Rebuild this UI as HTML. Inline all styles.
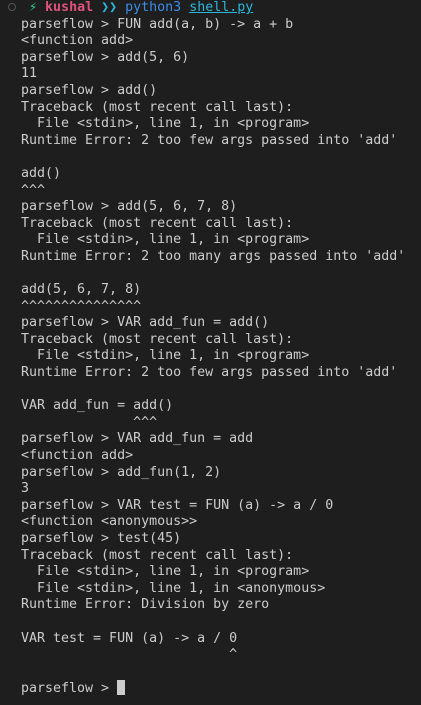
<!DOCTYPE html>
<html><head><meta charset="utf-8"><style>
html,body{margin:0;padding:0;background:#1e1e1e;width:421px;height:705px;overflow:hidden}
pre{margin:0;position:absolute;left:21px;top:0;font-family:"DejaVu Sans Mono","Liberation Mono",monospace;font-size:13.3px;line-height:16.6px;color:#cccccc}
.dot{position:absolute;left:8px;top:3px;width:6px;height:6px;border:1.5px solid #555;border-radius:50%}
.g{color:#23d18b}.k{color:#e0527e;font-weight:bold}.c{color:#29b8db}.b{color:#3b8eea}.u{color:#29b8db;text-decoration:underline}
.cur{display:inline-block;width:8px;height:15px;background:#cccccc;vertical-align:-3px}
</style></head><body>
<div class="dot"></div>
<pre> <span class="g">⚡</span> <span class="k">kushal</span> <span class="c">❯❯</span> <span class="b">python3</span> <span class="u">shell.py</span>
parseflow &gt; FUN add(a, b) -&gt; a + b
&lt;function add&gt;
parseflow &gt; add(5, 6)
11
parseflow &gt; add()
Traceback (most recent call last):
  File &lt;stdin&gt;, line 1, in &lt;program&gt;
Runtime Error: 2 too few args passed into 'add'

add()
^^^
parseflow &gt; add(5, 6, 7, 8)
Traceback (most recent call last):
  File &lt;stdin&gt;, line 1, in &lt;program&gt;
Runtime Error: 2 too many args passed into 'add'

add(5, 6, 7, 8)
^^^^^^^^^^^^^^^
parseflow &gt; VAR add_fun = add()
Traceback (most recent call last):
  File &lt;stdin&gt;, line 1, in &lt;program&gt;
Runtime Error: 2 too few args passed into 'add'

VAR add_fun = add()
              ^^^
parseflow &gt; VAR add_fun = add
&lt;function add&gt;
parseflow &gt; add_fun(1, 2)
3
parseflow &gt; VAR test = FUN (a) -&gt; a / 0
&lt;function &lt;anonymous&gt;&gt;
parseflow &gt; test(45)
Traceback (most recent call last):
  File &lt;stdin&gt;, line 1, in &lt;program&gt;
  File &lt;stdin&gt;, line 1, in &lt;anonymous&gt;
Runtime Error: Division by zero

VAR test = FUN (a) -&gt; a / 0
                          ^

parseflow &gt; <span class="cur"></span></pre>
</body></html>
